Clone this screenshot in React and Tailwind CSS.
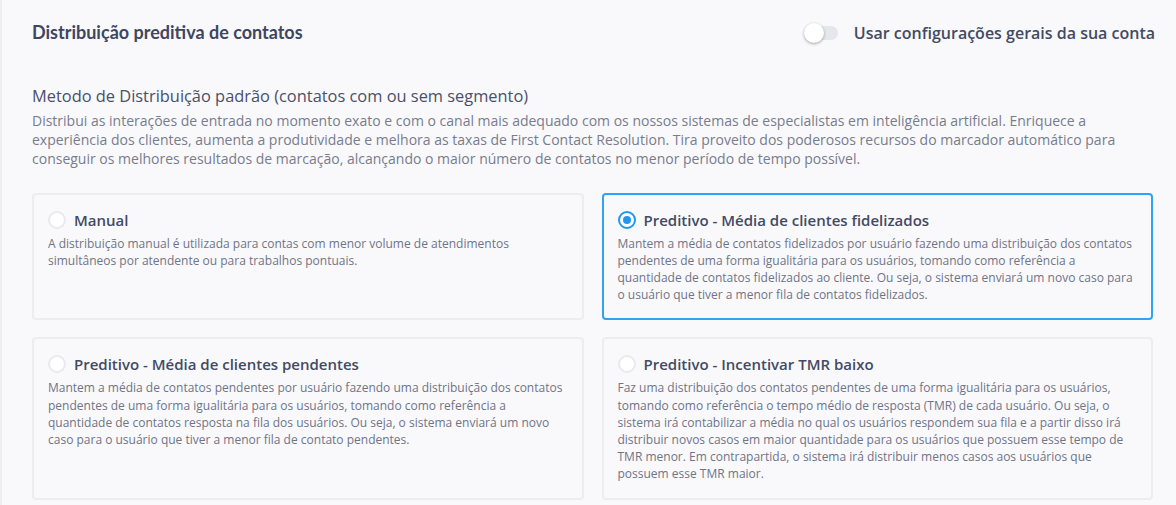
import React from "react";

const options = [
  {
    id: "manual",
    title: "Manual",
    text: "A distribuição manual é utilizada para contas com menor volume de atendimentos simultâneos por atendente ou para trabalhos pontuais.",
  },
  {
    id: "fidelizados",
    title: "Preditivo - Média de clientes fidelizados",
    text: "Mantem a média de contatos fidelizados por usuário fazendo uma distribuição dos contatos pendentes de uma forma igualitária para os usuários, tomando como referência a quantidade de contatos fidelizados ao cliente. Ou seja, o sistema enviará um novo caso para o usuário que tiver a menor fila de contatos fidelizados.",
  },
  {
    id: "pendentes",
    title: "Preditivo - Média de clientes pendentes",
    text: "Mantem a média de contatos pendentes por usuário fazendo uma distribuição dos contatos pendentes de uma forma igualitária para os usuários, tomando como referência a quantidade de contatos resposta na fila dos usuários. Ou seja, o sistema enviará um novo caso para o usuário que tiver a menor fila de contato pendentes.",
  },
  {
    id: "tmr",
    title: "Preditivo - Incentivar TMR baixo",
    text: "Faz uma distribuição dos contatos pendentes de uma forma igualitária para os usuários, tomando como referência o tempo médio de resposta (TMR) de cada usuário. Ou seja, o sistema irá contabilizar a média no qual os usuários respondem sua fila e a partir disso irá distribuir novos casos em maior quantidade para os usuários que possuem esse tempo de TMR menor. Em contrapartida, o sistema irá distribuir menos casos aos usuários que possuem esse TMR maior.",
  },
];

const OptionCard = ({ option, selected, onSelect }) => (
  <div
    onClick={() => onSelect(option.id)}
    className={
      "rounded-[4px] border-2 bg-[#f9f9fc] pl-[14px] pr-[12px] pt-[14px] pb-[15px] cursor-pointer " +
      (selected ? "border-[#2ea3f7]" : "border-[#ececf1]")
    }
  >
    <div className="flex items-center gap-[8px]">
      {selected ? (
        <span className="flex h-[18px] w-[18px] items-center justify-center rounded-full border-2 border-[#2196f3] bg-white">
          <span className="h-[8px] w-[8px] rounded-full bg-[#2196f3]" />
        </span>
      ) : (
        <span className="h-[18px] w-[18px] rounded-full border-2 border-[#e9e9ee] bg-white" />
      )}
      <span className="text-[15px] font-semibold leading-[22px] text-[#434a63]">{option.title}</span>
    </div>
    <p className="mt-[4px] text-[12px] leading-[17.2px] text-[#6f7486]">{option.text}</p>
  </div>
);

const App = () => {
  const [selected, setSelected] = React.useState("fidelizados");
  const [useGeneral, setUseGeneral] = React.useState(false);

  return (
    <div
      className="min-h-[505px] border-l-2 border-[#ededf3] bg-[#f9f9fc] pl-[30px] pr-[23px] pt-[19px] pb-[8px]"
      style={{ fontFamily: '"Open Sans", "Noto Sans", sans-serif' }}
    >
      <div className="flex items-center justify-between">
        <h1 className="text-[18px] font-bold text-[#3f4660]" style={{ fontFamily: 'Lato, "Open Sans", sans-serif' }}>
          Distribuição preditiva de contatos
        </h1>
        <label className="-mr-[2px] flex items-center gap-[16px] cursor-pointer" onClick={() => setUseGeneral(!useGeneral)}>
          <span className="relative flex h-[24px] w-[34px] items-center">
            <span className={"h-[14px] w-[34px] rounded-full " + (useGeneral ? "bg-[#9fd3fa]" : "bg-[#e6e7ec]")} />
            <span
              className={
                "absolute top-[2px] h-[20px] w-[20px] rounded-full bg-white shadow-[0_1px_3px_rgba(0,0,0,0.35)] " +
                (useGeneral ? "left-[14px]" : "left-0")
              }
            />
          </span>
          <span className="text-[16px] text-[#434a63] font-semibold">Usar configurações gerais da sua conta</span>
        </label>
      </div>

      <h2 className="mt-[38px] text-[16.4px] text-[#4a5068]">Metodo de Distribuição padrão (contatos com ou sem segmento)</h2>
      <p className="mt-[2px] text-[14px] leading-[19px] text-[#787c8c]">
        Distribui as interações de entrada no momento exato e com o canal mais adequado com os nossos sistemas de especialistas em inteligência artificial. Enriquece a experiência dos clientes, aumenta a produtividade e melhora as taxas de First Contact Resolution. Tira proveito dos poderosos recursos do marcador automático para conseguir os melhores resultados de marcação, alcançando o maior número de contatos no menor período de tempo possível.
      </p>

      <div className="mt-[25px] grid grid-cols-2 gap-x-[18px] gap-y-[17px]">
        {options.map((o) => (
          <OptionCard key={o.id} option={o} selected={selected === o.id} onSelect={setSelected} />
        ))}
      </div>
    </div>
  );
};

export default App;
